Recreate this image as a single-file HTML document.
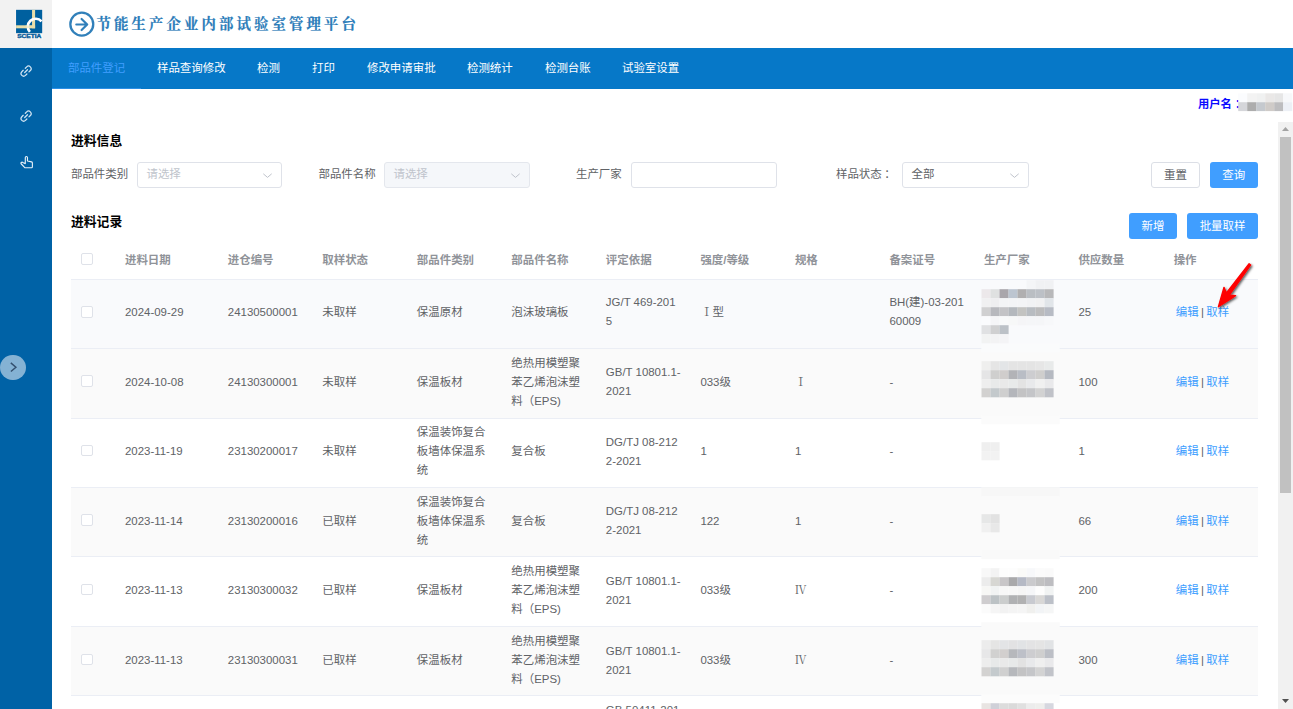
<!DOCTYPE html>
<html lang="zh-CN">
<head>
<meta charset="utf-8">
<title>节能生产企业内部试验室管理平台</title>
<style>
*{box-sizing:border-box;margin:0;padding:0}
html,body{width:1293px;height:709px;overflow:hidden;background:#fff}
body{position:relative;font-family:"Liberation Sans","Noto Sans CJK SC",sans-serif;font-size:11.45px;color:#606266}
.abs{position:absolute}
#logo{left:0;top:0;width:52px;height:48px;background:#f2f2f2}
#side{left:0;top:48px;width:52px;height:661px;background:#0062a6}
#head{left:52px;top:0;width:1241px;height:48px;background:#fff}
#title{left:96.6px;top:11px;height:26px;line-height:26px;font-family:"Liberation Serif","Noto Serif CJK SC",serif;font-weight:700;font-size:14.4px;letter-spacing:3.1px;color:#2b7cb9;-webkit-text-stroke:0.2px #2b7cb9;white-space:nowrap}
#nav{left:52px;top:48px;width:1241px;height:41px;background:#0678c8}
#nav span{position:absolute;top:0;height:41px;line-height:40px;font-size:11.45px;color:#fff;white-space:nowrap}
#nav span.act{color:#409eff}
#nav i{position:absolute;left:0;top:40px;width:89px;height:1px;background:#2b8fe6}
.user{left:1198px;top:96.8px;font-size:11.3px;font-weight:700;color:#0a0aff;line-height:14px;white-space:nowrap}
.h{font-weight:700;font-size:12.8px;color:#000;line-height:16px;white-space:nowrap}
.lbl{font-size:11.45px;color:#606266;line-height:26px;top:161px;white-space:nowrap}
.inp{top:161.5px;height:26.5px;border:1px solid #dfe2e9;border-radius:3px;background:#fff;font-size:11.45px;line-height:23.5px;padding-left:8.5px;color:#c0c4cc;white-space:nowrap}
.inp.dis{background:#f5f7fa;border-color:#e4e7ed}
.inp svg{position:absolute;right:9.4px;top:7.5px}
.btn{height:26px;border-radius:3px;font-size:11.45px;line-height:26px;text-align:center;color:#fff;background:#409eff;white-space:nowrap}
.btn.plain{background:#fff;border:1px solid #dcdfe6;color:#606266;line-height:24px}
table{position:absolute;left:71px;top:243.4px;width:1187px;border-collapse:collapse;table-layout:fixed}
th,td{text-align:left;vertical-align:middle;padding:0 8px;font-size:11.45px;line-height:19px;font-weight:400;white-space:nowrap;overflow:hidden}
th{color:#909399;height:36px;padding-bottom:2px;font-weight:700;border-bottom:1px solid #ebeef5}
td{color:#606266;border-bottom:1px solid #ebeef5;padding-bottom:2px}
tr.r td{height:69.385px}
tr.s td{background:#fafafa}
tr.r1 td{padding-bottom:3.4px}
tr.r1 .cb{top:-0.4px}
tr.r6 td{padding-bottom:0.6px}
tr.hv td{background:#f9fafc}
.cb{display:block;position:relative;top:-1.3px;width:11.5px;height:11.5px;border:1px solid #dfe2e9;border-radius:2px;background:#fff;margin-left:2px}
.op{color:#409eff}
td.op{padding-left:10.9px}
th:last-child{padding-left:8.7px}
.op b{font-weight:400;color:#606266;margin:0 2.3px}
.mz{position:absolute;background:#fff}
.mz i{position:absolute;display:block}
.rn{font-family:"Liberation Serif","Noto Serif CJK SC",serif}
#sb{left:1278px;top:122px;width:15px;height:587px;background:#f1f1f1}
#sb .th{position:absolute;left:1.7px;top:14.8px;width:11.3px;height:356.2px;background:#c1c1c1}
</style>
</head>
<body>
<div id="logo" class="abs">
<svg class="abs" style="left:15px;top:9px" width="29" height="31" viewBox="0 0 29 31">
<rect x="0.4" y="0.2" width="27.4" height="29.8" fill="#fbf7f4"/>
<rect x="1.06" y="0.8" width="26.14" height="23.4" fill="#00609f"/>
<rect x="17.05" y="0.8" width="3.05" height="18.5" fill="#e9dea9"/>
<rect x="1.06" y="16.3" width="19.04" height="3" fill="#e9dea9"/>
<path d="M26.5 12.3 A7.8 7.8 0 0 0 14.9 22.9" fill="none" stroke="#fff" stroke-width="2.7"/>
<rect x="10" y="16.5" width="7.05" height="2.6" fill="#e9dea9" opacity="0.55"/>
<text x="14.25" y="29.1" font-family="Liberation Sans, sans-serif" font-weight="700" font-size="4.6" text-anchor="middle" fill="#0b5e9c" stroke="#0b5e9c" stroke-width="0.35" textLength="24" lengthAdjust="spacingAndGlyphs">SCETIA</text>
</svg>
</div>
<div id="side" class="abs">
<svg class="abs" style="left:20px;top:16.9px" width="12.2" height="12.2" viewBox="0 0 14 14" fill="none" stroke="#cfe3f2" stroke-width="1.45" stroke-linecap="round">
<path d="M6.1 3.7 L7.7 2.1 A2.97 2.97 0 0 1 11.9 6.3 L10.3 7.9"/><path d="M7.9 10.3 L6.3 11.9 A2.97 2.97 0 0 1 2.1 7.7 L3.7 6.1"/><path d="M5.4 8.6 L8.6 5.4"/>
</svg>
<svg class="abs" style="left:20px;top:61.9px" width="12.2" height="12.2" viewBox="0 0 14 14" fill="none" stroke="#cfe3f2" stroke-width="1.45" stroke-linecap="round">
<path d="M6.1 3.7 L7.7 2.1 A2.97 2.97 0 0 1 11.9 6.3 L10.3 7.9"/><path d="M7.9 10.3 L6.3 11.9 A2.97 2.97 0 0 1 2.1 7.7 L3.7 6.1"/><path d="M5.4 8.6 L8.6 5.4"/>
</svg>
<svg class="abs" style="left:19.6px;top:106.6px" width="14.2" height="14.4" viewBox="0 0 15 15" fill="none" stroke="#e6f0f8" stroke-width="1.2" stroke-linejoin="round" stroke-linecap="round">
<path d="M5.6 9 V2.6 A1.1 1.1 0 0 1 7.9 2.6 V6.2 L12.2 7.2 A1.2 1.2 0 0 1 13.1 8.4 V12.4 A1 1 0 0 1 12.1 13.4 H5.3 L1.4 9.4 A1.1 1.1 0 0 1 3 7.8 L5.6 9"/>
</svg>
<div class="abs" style="left:0.3px;top:306.6px;width:25.6px;height:25.6px;border-radius:13px;background:#84b2d4"></div>
<svg class="abs" style="left:8px;top:313px" width="10" height="13" viewBox="0 0 10 13" fill="none" stroke="#34506f" stroke-width="1.45"><path d="M2.8 1.9 L7.9 6.2 L2.9 10.5"/></svg>
</div>
<div id="head" class="abs"></div>
<svg class="abs" style="left:68px;top:10px" width="28" height="28" viewBox="0 0 28 28" fill="none" stroke="#3180ba" stroke-width="2.3" stroke-linecap="round" stroke-linejoin="round">
<circle cx="13.8" cy="14.15" r="11.45"/><path d="M8.3 14.5 H18.6 M13.6 9 L19.2 14.5 L13.6 20" stroke-width="2.2"/>
</svg>
<div id="title" class="abs">节能生产企业内部试验室管理平台</div>
<div id="nav" class="abs">
<i></i>
<span class="act" style="left:16px">部品件登记</span>
<span style="left:105px">样品查询修改</span>
<span style="left:205px">检测</span>
<span style="left:260px">打印</span>
<span style="left:315px">修改申请审批</span>
<span style="left:415px">检测统计</span>
<span style="left:493px">检测台账</span>
<span style="left:570px">试验室设置</span>
</div>
<div class="abs user">用户名<span style="margin-left:3px">：</span></div>

<div class="abs h" style="left:71px;top:133px">进料信息</div>
<div class="abs lbl" style="left:71px">部品件类别</div>
<div class="abs inp" style="left:137px;width:145px">请选择<svg width="9" height="9" viewBox="0 0 9 9" fill="none" stroke="#c0c4cc" stroke-width="1"><path d="M0.3 3.8 L4.5 7.4 L8.7 3.8"/></svg></div>
<div class="abs lbl" style="left:318.5px">部品件名称</div>
<div class="abs inp dis" style="left:384px;width:146px">请选择<svg width="9" height="9" viewBox="0 0 9 9" fill="none" stroke="#c0c4cc" stroke-width="1"><path d="M0.3 3.8 L4.5 7.4 L8.7 3.8"/></svg></div>
<div class="abs lbl" style="left:576px">生产厂家</div>
<div class="abs inp" style="left:631px;width:146px"></div>
<div class="abs lbl" style="left:836px">样品状态<span style="margin-left:2.5px">：</span></div>
<div class="abs inp" style="left:902px;width:127px;color:#606266">全部<svg width="9" height="9" viewBox="0 0 9 9" fill="none" stroke="#c0c4cc" stroke-width="1"><path d="M0.3 3.8 L4.5 7.4 L8.7 3.8"/></svg></div>
<div class="abs btn plain" style="left:1151px;top:161.6px;width:49px">重置</div>
<div class="abs btn" style="left:1209.5px;top:161.6px;width:48.5px">查询</div>

<div class="abs h" style="left:71px;top:214px">进料记录</div>
<div class="abs btn" style="left:1129px;top:213px;width:48px">新增</div>
<div class="abs btn" style="left:1187px;top:213px;width:71px">批量取样</div>

<table>
<colgroup><col style="width:46.00px"><col style="width:102.80px"><col style="width:94.53px"><col style="width:94.53px"><col style="width:94.53px"><col style="width:94.53px"><col style="width:94.53px"><col style="width:94.53px"><col style="width:94.53px"><col style="width:94.53px"><col style="width:94.53px"><col style="width:94.53px"><col style="width:92.90px"></colgroup>
<tr><th><span class="cb"></span></th><th>进料日期</th><th>进仓编号</th><th>取样状态</th><th>部品件类别</th><th>部品件名称</th><th>评定依据</th><th>强度/等级</th><th>规格</th><th>备案证号</th><th>生产厂家</th><th>供应数量</th><th>操作</th></tr>
<tr class="r hv r1"><td><span class="cb"></span></td><td>2024-09-29</td><td>24130500001</td><td>未取样</td><td>保温原材</td><td>泡沫玻璃板</td><td>JG/T 469-201<br>5</td><td><span class="rn" style="margin-left:0.7px">Ⅰ</span>型</td><td></td><td>BH(建)-03-201<br>60009</td><td></td><td>25</td><td class="op">编辑<b>|</b>取样</td></tr>
<tr class="r s"><td><span class="cb"></span></td><td>2024-10-08</td><td>24130300001</td><td>未取样</td><td>保温板材</td><td>绝热用模塑聚<br>苯乙烯泡沫塑<br>料（EPS)</td><td>GB/T 10801.1-<br>2021</td><td>033级</td><td><span class="rn">Ⅰ</span></td><td>-</td><td></td><td>100</td><td class="op">编辑<b>|</b>取样</td></tr>
<tr class="r"><td><span class="cb"></span></td><td>2023-11-19</td><td>23130200017</td><td>未取样</td><td>保温装饰复合<br>板墙体保温系<br>统</td><td>复合板</td><td>DG/TJ 08-212<br>2-2021</td><td>1</td><td>1</td><td>-</td><td></td><td>1</td><td class="op">编辑<b>|</b>取样</td></tr>
<tr class="r s"><td><span class="cb"></span></td><td>2023-11-14</td><td>23130200016</td><td>已取样</td><td>保温装饰复合<br>板墙体保温系<br>统</td><td>复合板</td><td>DG/TJ 08-212<br>2-2021</td><td>122</td><td>1</td><td>-</td><td></td><td>66</td><td class="op">编辑<b>|</b>取样</td></tr>
<tr class="r"><td><span class="cb"></span></td><td>2023-11-13</td><td>23130300032</td><td>已取样</td><td>保温板材</td><td>绝热用模塑聚<br>苯乙烯泡沫塑<br>料（EPS)</td><td>GB/T 10801.1-<br>2021</td><td>033级</td><td><span class="rn">Ⅳ</span></td><td>-</td><td></td><td>200</td><td class="op">编辑<b>|</b>取样</td></tr>
<tr class="r s r6"><td><span class="cb"></span></td><td>2023-11-13</td><td>23130300031</td><td>已取样</td><td>保温板材</td><td>绝热用模塑聚<br>苯乙烯泡沫塑<br>料（EPS)</td><td>GB/T 10801.1-<br>2021</td><td>033级</td><td><span class="rn">Ⅳ</span></td><td>-</td><td></td><td>300</td><td class="op">编辑<b>|</b>取样</td></tr>
<tr class="r"><td><span class="cb"></span></td><td>2023-11-10</td><td>23130100005</td><td>已取样</td><td>保温砂浆</td><td>无机保温砂浆</td><td>GB 50411-201<br>9<br>&nbsp;</td><td>Ⅰ型</td><td>-</td><td>-</td><td></td><td>50</td><td class="op">编辑<b>|</b>取样</td></tr>
</table>
<svg class="abs" id="mosaic" style="left:0;top:0;pointer-events:none" width="1293" height="709" viewBox="0 0 1293 709">
<rect x="981.3" y="343.2" width="78.4" height="9.0" fill="#fafbfc"/>
<rect x="981.3" y="415.2" width="78.4" height="9.0" fill="#fbfbfb"/>
<rect x="981.3" y="487.2" width="78.4" height="9.0" fill="#f7f7f7"/>
<rect x="981.3" y="550.2" width="78.4" height="9.0" fill="#f9f9f9"/>
<rect x="981.3" y="622.2" width="78.4" height="9.0" fill="#fafafa"/>
<rect x="981.3" y="694.2" width="78.4" height="9.0" fill="#fcfcfc"/>
<rect x="981.5" y="280.2" width="9.1" height="9.1" fill="#f9fafc"/>
<rect x="990.5" y="280.2" width="9.1" height="9.1" fill="#f9fafc"/>
<rect x="999.5" y="280.2" width="9.1" height="9.1" fill="#f9fafc"/>
<rect x="1008.5" y="280.2" width="9.1" height="9.1" fill="#f9fafc"/>
<rect x="1017.5" y="280.2" width="9.1" height="9.1" fill="#f9fafc"/>
<rect x="1026.5" y="280.2" width="9.1" height="9.1" fill="#f4f5f7"/>
<rect x="1035.5" y="280.2" width="9.1" height="9.1" fill="#f0f1f3"/>
<rect x="1044.5" y="280.2" width="9.1" height="9.1" fill="#f0f1f3"/>
<rect x="981.5" y="289.2" width="9.1" height="9.1" fill="#ece8ea"/>
<rect x="990.5" y="289.2" width="9.1" height="9.1" fill="#dfe1e1"/>
<rect x="999.5" y="289.2" width="9.1" height="9.1" fill="#a9a6ab"/>
<rect x="1008.5" y="289.2" width="9.1" height="9.1" fill="#bcc5d0"/>
<rect x="1017.5" y="289.2" width="9.1" height="9.1" fill="#b0afb0"/>
<rect x="1026.5" y="289.2" width="9.1" height="9.1" fill="#babec3"/>
<rect x="1035.5" y="289.2" width="9.1" height="9.1" fill="#bcc0c6"/>
<rect x="1044.5" y="289.2" width="9.1" height="9.1" fill="#b8b8ba"/>
<rect x="981.5" y="298.2" width="9.1" height="9.1" fill="#f0f0f1"/>
<rect x="990.5" y="298.2" width="9.1" height="9.1" fill="#eeeef0"/>
<rect x="999.5" y="298.2" width="9.1" height="9.1" fill="#f3f4f6"/>
<rect x="1008.5" y="298.2" width="9.1" height="9.1" fill="#f3f4f6"/>
<rect x="1017.5" y="298.2" width="9.1" height="9.1" fill="#f3f4f6"/>
<rect x="1026.5" y="298.2" width="9.1" height="9.1" fill="#f1f2f4"/>
<rect x="1035.5" y="298.2" width="9.1" height="9.1" fill="#f1f1f2"/>
<rect x="1044.5" y="298.2" width="9.1" height="9.1" fill="#e1e5e9"/>
<rect x="981.5" y="307.2" width="9.1" height="9.1" fill="#d0d0d1"/>
<rect x="990.5" y="307.2" width="9.1" height="9.1" fill="#b7b8bd"/>
<rect x="999.5" y="307.2" width="9.1" height="9.1" fill="#c3c3c6"/>
<rect x="1008.5" y="307.2" width="9.1" height="9.1" fill="#b4b8bd"/>
<rect x="1017.5" y="307.2" width="9.1" height="9.1" fill="#c3c3c1"/>
<rect x="1026.5" y="307.2" width="9.1" height="9.1" fill="#b8bcc1"/>
<rect x="1035.5" y="307.2" width="9.1" height="9.1" fill="#bbbbbc"/>
<rect x="1044.5" y="307.2" width="9.1" height="9.1" fill="#b7bbc4"/>
<rect x="981.5" y="316.2" width="9.1" height="9.1" fill="#fafbfd"/>
<rect x="990.5" y="316.2" width="9.1" height="9.1" fill="#f5f5f7"/>
<rect x="999.5" y="316.2" width="9.1" height="9.1" fill="#f8f9fa"/>
<rect x="1008.5" y="316.2" width="9.1" height="9.1" fill="#f7f8f8"/>
<rect x="1017.5" y="316.2" width="9.1" height="9.1" fill="#f5f5f7"/>
<rect x="1026.5" y="316.2" width="9.1" height="9.1" fill="#f5f6f8"/>
<rect x="1035.5" y="316.2" width="9.1" height="9.1" fill="#f5f6f8"/>
<rect x="1044.5" y="316.2" width="9.1" height="9.1" fill="#f7f8fa"/>
<rect x="981.5" y="325.2" width="9.1" height="9.1" fill="#e0e1e3"/>
<rect x="990.5" y="325.2" width="9.1" height="9.1" fill="#d0d0d1"/>
<rect x="999.5" y="325.2" width="9.1" height="9.1" fill="#bcc1c7"/>
<rect x="981.5" y="334.2" width="9.1" height="9.1" fill="#f2f3f3"/>
<rect x="990.5" y="334.2" width="9.1" height="9.1" fill="#f3f3f4"/>
<rect x="999.5" y="334.2" width="9.1" height="9.1" fill="#f4f4f6"/>
<rect x="981.5" y="361.2" width="9.1" height="9.1" fill="#efefee"/>
<rect x="990.5" y="361.2" width="9.1" height="9.1" fill="#e5e5e5"/>
<rect x="999.5" y="361.2" width="9.1" height="9.1" fill="#e3e5e7"/>
<rect x="1008.5" y="361.2" width="9.1" height="9.1" fill="#e4e4e4"/>
<rect x="1017.5" y="361.2" width="9.1" height="9.1" fill="#e4e4e4"/>
<rect x="1026.5" y="361.2" width="9.1" height="9.1" fill="#e4e4e4"/>
<rect x="1035.5" y="361.2" width="9.1" height="9.1" fill="#e6e6e6"/>
<rect x="1044.5" y="361.2" width="9.1" height="9.1" fill="#e8eaea"/>
<rect x="981.5" y="370.2" width="9.1" height="9.1" fill="#e5e5e6"/>
<rect x="990.5" y="370.2" width="9.1" height="9.1" fill="#cfcfce"/>
<rect x="999.5" y="370.2" width="9.1" height="9.1" fill="#d0cdcc"/>
<rect x="1008.5" y="370.2" width="9.1" height="9.1" fill="#b2b3b7"/>
<rect x="1017.5" y="370.2" width="9.1" height="9.1" fill="#b9bdc5"/>
<rect x="1026.5" y="370.2" width="9.1" height="9.1" fill="#cdcdd0"/>
<rect x="1035.5" y="370.2" width="9.1" height="9.1" fill="#cfcecd"/>
<rect x="1044.5" y="370.2" width="9.1" height="9.1" fill="#b5b9c1"/>
<rect x="981.5" y="379.2" width="9.1" height="9.1" fill="#eeeeee"/>
<rect x="990.5" y="379.2" width="9.1" height="9.1" fill="#e8eaea"/>
<rect x="999.5" y="379.2" width="9.1" height="9.1" fill="#e9e9e9"/>
<rect x="1008.5" y="379.2" width="9.1" height="9.1" fill="#e8eaea"/>
<rect x="1017.5" y="379.2" width="9.1" height="9.1" fill="#e3e3e3"/>
<rect x="1026.5" y="379.2" width="9.1" height="9.1" fill="#e8e9eb"/>
<rect x="1035.5" y="379.2" width="9.1" height="9.1" fill="#f0f0f0"/>
<rect x="1044.5" y="379.2" width="9.1" height="9.1" fill="#e9e9eb"/>
<rect x="981.5" y="388.2" width="9.1" height="9.1" fill="#d2d1d0"/>
<rect x="990.5" y="388.2" width="9.1" height="9.1" fill="#c3c9cc"/>
<rect x="999.5" y="388.2" width="9.1" height="9.1" fill="#cfcfcf"/>
<rect x="1008.5" y="388.2" width="9.1" height="9.1" fill="#b4b6bb"/>
<rect x="1017.5" y="388.2" width="9.1" height="9.1" fill="#c3c3c4"/>
<rect x="1026.5" y="388.2" width="9.1" height="9.1" fill="#c4c5c8"/>
<rect x="1035.5" y="388.2" width="9.1" height="9.1" fill="#d2d2d2"/>
<rect x="1044.5" y="388.2" width="9.1" height="9.1" fill="#c0c2c8"/>
<rect x="981.5" y="442.2" width="9.1" height="9.1" fill="#efefef"/>
<rect x="990.5" y="442.2" width="9.1" height="9.1" fill="#efefef"/>
<rect x="981.5" y="451.2" width="9.1" height="9.1" fill="#f2f2f2"/>
<rect x="990.5" y="451.2" width="9.1" height="9.1" fill="#f2f2f2"/>
<rect x="981.5" y="514.2" width="9.1" height="9.1" fill="#e6e7e7"/>
<rect x="990.5" y="514.2" width="9.1" height="9.1" fill="#e2e2e2"/>
<rect x="981.5" y="523.2" width="9.1" height="9.1" fill="#f0f0f0"/>
<rect x="990.5" y="523.2" width="9.1" height="9.1" fill="#e8e8e8"/>
<rect x="981.5" y="568.2" width="9.1" height="9.1" fill="#f8f8f8"/>
<rect x="990.5" y="568.2" width="9.1" height="9.1" fill="#f3f3f3"/>
<rect x="999.5" y="568.2" width="9.1" height="9.1" fill="#fdfdfd"/>
<rect x="1008.5" y="568.2" width="9.1" height="9.1" fill="#fdfdfd"/>
<rect x="1017.5" y="568.2" width="9.1" height="9.1" fill="#fafaf8"/>
<rect x="1026.5" y="568.2" width="9.1" height="9.1" fill="#f7f8fa"/>
<rect x="1035.5" y="568.2" width="9.1" height="9.1" fill="#fbfbfb"/>
<rect x="1044.5" y="568.2" width="9.1" height="9.1" fill="#fafafa"/>
<rect x="981.5" y="577.2" width="9.1" height="9.1" fill="#ececec"/>
<rect x="990.5" y="577.2" width="9.1" height="9.1" fill="#d7d7d3"/>
<rect x="999.5" y="577.2" width="9.1" height="9.1" fill="#c8c6c8"/>
<rect x="1008.5" y="577.2" width="9.1" height="9.1" fill="#a9a9ab"/>
<rect x="1017.5" y="577.2" width="9.1" height="9.1" fill="#b5b9c5"/>
<rect x="1026.5" y="577.2" width="9.1" height="9.1" fill="#cacacd"/>
<rect x="1035.5" y="577.2" width="9.1" height="9.1" fill="#c2c2c3"/>
<rect x="1044.5" y="577.2" width="9.1" height="9.1" fill="#bdbdc1"/>
<rect x="981.5" y="586.2" width="9.1" height="9.1" fill="#f7f7f5"/>
<rect x="990.5" y="586.2" width="9.1" height="9.1" fill="#f1f3f3"/>
<rect x="999.5" y="586.2" width="9.1" height="9.1" fill="#f7f7f7"/>
<rect x="1008.5" y="586.2" width="9.1" height="9.1" fill="#f7f7f7"/>
<rect x="1017.5" y="586.2" width="9.1" height="9.1" fill="#f5f5f5"/>
<rect x="1026.5" y="586.2" width="9.1" height="9.1" fill="#f5f6f8"/>
<rect x="1035.5" y="586.2" width="9.1" height="9.1" fill="#fdfdfd"/>
<rect x="1044.5" y="586.2" width="9.1" height="9.1" fill="#f1f3f3"/>
<rect x="981.5" y="595.2" width="9.1" height="9.1" fill="#cfcdcf"/>
<rect x="990.5" y="595.2" width="9.1" height="9.1" fill="#bcc2c5"/>
<rect x="999.5" y="595.2" width="9.1" height="9.1" fill="#cbcdcd"/>
<rect x="1008.5" y="595.2" width="9.1" height="9.1" fill="#b0b1b3"/>
<rect x="1017.5" y="595.2" width="9.1" height="9.1" fill="#b1b1b2"/>
<rect x="1026.5" y="595.2" width="9.1" height="9.1" fill="#c8cad0"/>
<rect x="1035.5" y="595.2" width="9.1" height="9.1" fill="#d8d7d6"/>
<rect x="1044.5" y="595.2" width="9.1" height="9.1" fill="#bcc0c8"/>
<rect x="981.5" y="604.2" width="9.1" height="9.1" fill="#fbfbfb"/>
<rect x="990.5" y="604.2" width="9.1" height="9.1" fill="#f5f5f5"/>
<rect x="999.5" y="604.2" width="9.1" height="9.1" fill="#f2f2f2"/>
<rect x="1008.5" y="604.2" width="9.1" height="9.1" fill="#f4f4f4"/>
<rect x="1017.5" y="604.2" width="9.1" height="9.1" fill="#f5f5f5"/>
<rect x="1026.5" y="604.2" width="9.1" height="9.1" fill="#f0f0ee"/>
<rect x="1035.5" y="604.2" width="9.1" height="9.1" fill="#f2f4f6"/>
<rect x="1044.5" y="604.2" width="9.1" height="9.1" fill="#f5f6f6"/>
<rect x="981.5" y="640.2" width="9.1" height="9.1" fill="#ececec"/>
<rect x="990.5" y="640.2" width="9.1" height="9.1" fill="#e5e5e4"/>
<rect x="999.5" y="640.2" width="9.1" height="9.1" fill="#e3e4e6"/>
<rect x="1008.5" y="640.2" width="9.1" height="9.1" fill="#e2e2e3"/>
<rect x="1017.5" y="640.2" width="9.1" height="9.1" fill="#e1e3e5"/>
<rect x="1026.5" y="640.2" width="9.1" height="9.1" fill="#e3e3e4"/>
<rect x="1035.5" y="640.2" width="9.1" height="9.1" fill="#e4e4e4"/>
<rect x="1044.5" y="640.2" width="9.1" height="9.1" fill="#e1e3e5"/>
<rect x="981.5" y="649.2" width="9.1" height="9.1" fill="#e7e7e8"/>
<rect x="990.5" y="649.2" width="9.1" height="9.1" fill="#d1d1d0"/>
<rect x="999.5" y="649.2" width="9.1" height="9.1" fill="#d2cfce"/>
<rect x="1008.5" y="649.2" width="9.1" height="9.1" fill="#b6b8bc"/>
<rect x="1017.5" y="649.2" width="9.1" height="9.1" fill="#bdc0c8"/>
<rect x="1026.5" y="649.2" width="9.1" height="9.1" fill="#cdcdd0"/>
<rect x="1035.5" y="649.2" width="9.1" height="9.1" fill="#cfcfcf"/>
<rect x="1044.5" y="649.2" width="9.1" height="9.1" fill="#bcbfc6"/>
<rect x="981.5" y="658.2" width="9.1" height="9.1" fill="#ededed"/>
<rect x="990.5" y="658.2" width="9.1" height="9.1" fill="#e7e9e9"/>
<rect x="999.5" y="658.2" width="9.1" height="9.1" fill="#e9e9e9"/>
<rect x="1008.5" y="658.2" width="9.1" height="9.1" fill="#e7e9e9"/>
<rect x="1017.5" y="658.2" width="9.1" height="9.1" fill="#e2e2e2"/>
<rect x="1026.5" y="658.2" width="9.1" height="9.1" fill="#e8e9eb"/>
<rect x="1035.5" y="658.2" width="9.1" height="9.1" fill="#efefef"/>
<rect x="1044.5" y="658.2" width="9.1" height="9.1" fill="#e9e9eb"/>
<rect x="981.5" y="667.2" width="9.1" height="9.1" fill="#d3d2d1"/>
<rect x="990.5" y="667.2" width="9.1" height="9.1" fill="#c4cacd"/>
<rect x="999.5" y="667.2" width="9.1" height="9.1" fill="#d0d0d0"/>
<rect x="1008.5" y="667.2" width="9.1" height="9.1" fill="#b6b8bc"/>
<rect x="1017.5" y="667.2" width="9.1" height="9.1" fill="#c3c3c4"/>
<rect x="1026.5" y="667.2" width="9.1" height="9.1" fill="#c5c6c9"/>
<rect x="1035.5" y="667.2" width="9.1" height="9.1" fill="#d3d3d3"/>
<rect x="1044.5" y="667.2" width="9.1" height="9.1" fill="#c1c3c9"/>
<rect x="981.5" y="703.2" width="9.1" height="9.1" fill="#e8e4e2"/>
<rect x="990.5" y="703.2" width="9.1" height="9.1" fill="#cfd0d8"/>
<rect x="999.5" y="703.2" width="9.1" height="9.1" fill="#dcdcdc"/>
<rect x="1008.5" y="703.2" width="9.1" height="9.1" fill="#dadada"/>
<rect x="1017.5" y="703.2" width="9.1" height="9.1" fill="#e0e0e0"/>
<rect x="1026.5" y="703.2" width="9.1" height="9.1" fill="#ececec"/>
<rect x="1035.5" y="703.2" width="9.1" height="9.1" fill="#eeeeec"/>
<rect x="1044.5" y="703.2" width="9.1" height="9.1" fill="#d6d7df"/>
<rect x="1238.2" y="93.3" width="9.1" height="8.9" fill="#fbfcfe"/>
<rect x="1247.2" y="93.3" width="9.1" height="8.9" fill="#f3f3f3"/>
<rect x="1256.2" y="93.3" width="9.1" height="8.9" fill="#f0f1f1"/>
<rect x="1265.2" y="93.3" width="9.1" height="8.9" fill="#eae8e7"/>
<rect x="1274.2" y="93.3" width="9.1" height="8.9" fill="#e6e6e6"/>
<rect x="1283.2" y="93.3" width="9.1" height="8.9" fill="#f7f8fa"/>
<rect x="1238.2" y="102.2" width="9.1" height="8.9" fill="#d5d6da"/>
<rect x="1247.2" y="102.2" width="9.1" height="8.9" fill="#adadad"/>
<rect x="1256.2" y="102.2" width="9.1" height="8.9" fill="#c5c9ce"/>
<rect x="1265.2" y="102.2" width="9.1" height="8.9" fill="#cfcbc8"/>
<rect x="1274.2" y="102.2" width="9.1" height="8.9" fill="#bdbdbf"/>
<rect x="1283.2" y="102.2" width="9.1" height="8.9" fill="#edf0f6"/>
</svg>

<div id="sb" class="abs"><div class="th"></div>
<svg class="abs" style="left:2.9px;top:4.2px" width="9" height="6" viewBox="0 0 9 6"><path d="M1 5 L4.5 1 L8 5 Z" fill="#a3a3a3"/></svg>
<svg class="abs" style="left:3px;top:575.9px" width="9" height="6" viewBox="0 0 9 6"><path d="M1 1 L4.5 5 L8 1 Z" fill="#505050"/></svg>
</div>

<svg class="abs" style="left:1205px;top:255px" width="60" height="65" viewBox="0 0 60 65">
<defs><filter id="ds" x="-30%" y="-30%" width="160%" height="160%"><feDropShadow dx="1.3" dy="1.3" stdDeviation="0.9" flood-color="#000" flood-opacity="0.65"/></filter></defs>
<path d="M44.1 8.7 L45.7 9.9 L24.3 40.1 L30.6 40.7 L13.4 51.8 L19 32.3 L21.4 38 Z" fill="#fe0000" stroke="#fe0000" stroke-width="1.3" stroke-linejoin="round" filter="url(#ds)"/>
</svg>
</body>
</html>
